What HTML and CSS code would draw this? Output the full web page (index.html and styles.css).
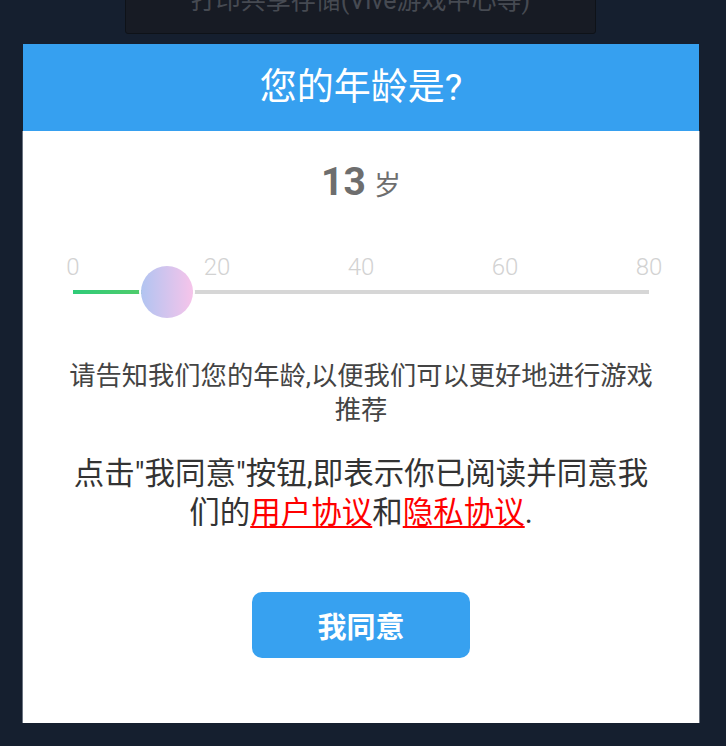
FILE: index.html
```html
<!DOCTYPE html>
<html lang="zh-CN">
<head>
<meta charset="utf-8">
<title>您的年龄是?</title>
<link rel="stylesheet" href="styles.css">
</head>
<body>
<div class="topbox"><span class="topbox-text">打印共享存储(Vive游戏中心等)</span></div>
<div class="modal">
  <div class="modal-header">您的年龄是?</div>
  <div class="modal-body">
    <div class="age"><span class="age-num">13</span><span class="age-unit">岁</span></div>
    <div class="slider">
      <div class="labels">
        <span class="label">0</span>
        <span class="label">20</span>
        <span class="label">40</span>
        <span class="label">60</span>
        <span class="label">80</span>
      </div>
      <div class="track-area">
        <div class="track">
          <div class="fill" style="width: 16.25%"></div>
        </div>
        <div class="thumb" style="left: 16.25%"></div>
      </div>
    </div>
    <p class="hint">请告知我们您的年龄,以便我们可以更好地进行游戏推荐</p>
    <p class="agree">点击"我同意"按钮,即表示你已阅读并同意我们的<a class="link" href="#">用户协议</a>和<a class="link" href="#">隐私协议</a>.</p>
    <div class="actions"><button class="btn">我同意</button></div>
  </div>
</div>
</body>
</html>
```

FILE: styles.css
```css
* { box-sizing: border-box; }
html, body {
  margin: 0;
  padding: 0;
}
body {
  width: 726px;
  height: 746px;
  overflow: hidden;
  background: #151f2f;
  font-family: "Roboto", "Noto Sans CJK SC", sans-serif;
}
.topbox {
  margin-left: 125px;
  margin-top: -20px;
  width: 471px;
  height: 54px;
  background: #171b24;
  border: 1px solid #0e1218;
  border-radius: 3px;
  text-align: center;
  color: #464a52;
  font-size: 25px;
  line-height: 40px;
  overflow: hidden;
}
.modal {
  margin-top: 10px;
  margin-left: 22px;
  width: 678px;
}
.modal-header {
  height: 87px;
  background: #36a0f0;
  color: #ffffff;
  font-size: 37px;
  line-height: 87px;
  text-align: center;
  margin: 0 1px;
}
.modal-body {
  height: 592px;
  background: #ffffff;
  border-left: 1px solid #6a7380;
  border-right: 1px solid #6a7380;
  padding-top: 26px;
}
.age {
  height: 50px;
  line-height: 50px;
  text-align: center;
  color: #6e6e6e;
  display: flex;
  justify-content: center;
  align-items: baseline;
  gap: 8px;
}
.age-num {
  font-family: "Roboto", sans-serif;
  font-weight: 700;
  font-size: 39px;
}
.age-unit {
  font-family: "Noto Sans CJK SC", sans-serif;
  font-size: 27px;
}
.slider {
  margin-top: 47px;
  padding: 0 30px;
}
.labels {
  display: flex;
  justify-content: space-between;
  height: 26px;
  line-height: 26px;
}
.label {
  width: 40px;
  text-align: center;
  font-family: "Roboto", sans-serif;
  font-weight: 300;
  font-size: 24px;
  color: #d2d2d2;
}
.track-area {
  position: relative;
  height: 28px;
  margin: -2px 20px 0;
  display: flex;
  align-items: center;
}
.track {
  width: 100%;
  height: 4px;
  background: #d6d6d6;
}
.fill {
  height: 100%;
  background: linear-gradient(to right, #2fcb78, #5ccc67);
}
.thumb {
  position: absolute;
  top: 50%;
  width: 52px;
  height: 52px;
  margin-left: -26px;
  margin-top: -26px;
  border-radius: 50%;
  background: linear-gradient(to right, #b1c4f1, #f6c4ea);
  box-shadow: 0 0 0 2px #ffffff;
}
.hint {
  margin: 53px 0 0;
  padding: 0 40px;
  font-size: 26.3px;
  line-height: 34px;
  color: #444444;
  text-align: center;
}
.agree {
  margin: 27px 0 0;
  padding: 0 40px;
  font-size: 30.5px;
  line-height: 39px;
  color: #333333;
  text-align: center;
}
.link {
  color: #ff0000;
  text-decoration: underline;
  text-underline-offset: 3px;
  text-decoration-thickness: 2px;
}
.actions {
  margin-top: 60px;
  display: flex;
  justify-content: center;
}
.btn {
  width: 218px;
  height: 66px;
  border: none;
  border-radius: 10px;
  background: #37a1f0;
  color: #ffffff;
  font-family: "Noto Sans CJK SC", sans-serif;
  font-weight: 700;
  font-size: 29px;
  padding: 0;
  cursor: pointer;
}
```
